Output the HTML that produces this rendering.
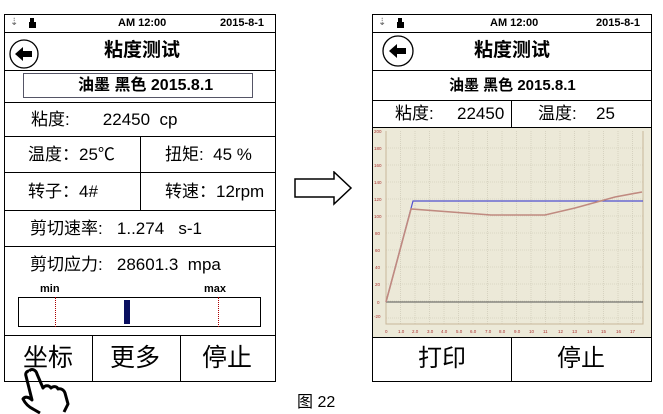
<!DOCTYPE html>
<html><head><meta charset="utf-8"><style>
*{margin:0;padding:0;box-sizing:border-box}
body{width:663px;height:414px;background:#fff;position:relative;overflow:hidden;font-family:"Liberation Sans","Noto Sans CJK SC",sans-serif;color:#000}
.a{position:absolute}
.b{position:absolute;border:1.5px solid #000}
.h{position:absolute;height:0;border-top:1.5px solid #000}
.v{position:absolute;width:0;border-left:1.5px solid #000}
.t{position:absolute;white-space:nowrap;line-height:1}
</style></head><body>
<!-- LEFT PANEL -->
<div class="b" style="left:4px;top:14px;width:272px;height:368px"></div>
<div class="h" style="left:4px;top:32px;width:272px"></div>
<div class="h" style="left:4px;top:70px;width:272px"></div>
<div class="h" style="left:4px;top:102px;width:272px"></div>
<div class="h" style="left:4px;top:136px;width:272px"></div>
<div class="h" style="left:4px;top:172px;width:272px"></div>
<div class="h" style="left:4px;top:210px;width:272px"></div>
<div class="h" style="left:4px;top:246px;width:272px"></div>
<div class="h" style="left:4px;top:335px;width:272px"></div>
<div class="v" style="left:140px;top:136px;height:74px"></div>
<div class="v" style="left:92px;top:335px;height:47px"></div>
<div class="v" style="left:180px;top:335px;height:47px"></div>
<div class="t" style="left:10px;top:18px;font-size:10px;color:#666">⇣</div>
<svg class="a" style="left:26px;top:17px" width="13" height="13"><path d="M3 5h7v6H3z M4 1h4v4H4z" fill="#000"/></svg>
<div class="t" style="left:118px;top:18px;font-size:11px;font-weight:bold">AM 12:00</div>
<div class="t" style="left:220px;top:18px;font-size:11px;font-weight:bold">2015-8-1</div>
<svg class="a" style="left:7px;top:38px" width="36" height="32"><circle cx="17" cy="16" r="14" fill="#fff" stroke="#000" stroke-width="1.3"/><path d="M8 16l8-7v4h9v6h-9v4z" fill="#000"/></svg>
<div class="t" style="left:104px;top:41px;font-size:19px;font-weight:bold">粘度测试</div>
<div class="a" style="left:23px;top:73px;width:230px;height:25px;border:1.2px solid #556"></div>
<div class="t" style="left:78px;top:78px;font-size:16px;font-weight:bold">油墨 黑色 2015.8.1</div>
<div class="t" style="left:31px;top:111px;font-size:17px">粘度:&nbsp;&nbsp;&nbsp;&nbsp;&nbsp;&nbsp;&nbsp;22450&nbsp;&nbsp;cp</div>
<div class="t" style="left:28px;top:146px;font-size:17px">温度：25℃</div>
<div class="t" style="left:165px;top:146px;font-size:17px">扭矩:&nbsp;&nbsp;45 %</div>
<div class="t" style="left:28px;top:183px;font-size:17px">转子：4#</div>
<div class="t" style="left:165px;top:183px;font-size:17px">转速：12rpm</div>
<div class="t" style="left:30px;top:220px;font-size:17px">剪切速率:&nbsp;&nbsp;&nbsp;1..274&nbsp;&nbsp;&nbsp;s-1</div>
<div class="t" style="left:30px;top:256px;font-size:17px">剪切应力:&nbsp;&nbsp;&nbsp;28601.3&nbsp;&nbsp;mpa</div>
<div class="t" style="left:40px;top:284px;font-size:11px;font-weight:bold">min</div>
<div class="t" style="left:204px;top:284px;font-size:11px;font-weight:bold">max</div>
<div class="a" style="left:18px;top:297px;width:243px;height:30px;border:1.2px solid #000"></div>
<div class="a" style="left:55px;top:297px;height:30px;border-left:1.5px dotted #a00"></div>
<div class="a" style="left:218px;top:297px;height:30px;border-left:1.5px dotted #a00"></div>
<div class="a" style="left:124px;top:300px;width:6px;height:24px;background:#0a1060"></div>
<div class="t" style="left:23px;top:346px;font-size:25px">坐标</div>
<div class="t" style="left:110px;top:346px;font-size:25px">更多</div>
<div class="t" style="left:202px;top:346px;font-size:25px">停止</div>
<svg class="a" style="left:20px;top:364px" width="60" height="50"><path d="M9 7c3-3 7-1 8 3l6 14c2-3 6-3 8 0 2-2 6-2 7 1 3-1 6 1 7 4l3 11-4 8M20 49l-7-4c-4-2-8-6-10-10 2-3 6-2 9 1L6 12c-1-3 1-5 3-5" fill="none" stroke="#000" stroke-width="3" stroke-linejoin="round"/></svg>
<!-- ARROW -->
<svg class="a" style="left:294px;top:171px" width="60" height="35"><path d="M1 8h39V1l17 16-17 16v-7H1z" fill="#fff" stroke="#000" stroke-width="1.5"/></svg>
<div class="t" style="left:297px;top:395px;font-size:16px">图 22</div>
<!-- RIGHT PANEL -->
<div class="b" style="left:372px;top:14px;width:280px;height:368px"></div>
<div class="h" style="left:372px;top:32px;width:280px"></div>
<div class="h" style="left:372px;top:70px;width:280px"></div>
<div class="h" style="left:372px;top:100px;width:280px"></div>
<div class="h" style="left:372px;top:127px;width:280px"></div>
<div class="h" style="left:372px;top:337px;width:280px"></div>
<div class="v" style="left:511px;top:100px;height:27px"></div>
<div class="v" style="left:511px;top:337px;height:45px"></div>
<div class="t" style="left:378px;top:18px;font-size:10px;color:#666">⇣</div>
<svg class="a" style="left:394px;top:17px" width="13" height="13"><path d="M3 5h7v6H3z M4 1h4v4H4z" fill="#000"/></svg>
<div class="t" style="left:490px;top:18px;font-size:11px;font-weight:bold">AM 12:00</div>
<div class="t" style="left:596px;top:18px;font-size:11px;font-weight:bold">2015-8-1</div>
<svg class="a" style="left:381px;top:35px" width="36" height="33"><circle cx="17" cy="16" r="15" fill="#fff" stroke="#000" stroke-width="1.3"/><path d="M8 16l8-7v4h9v6h-9v4z" fill="#000"/></svg>
<div class="t" style="left:474px;top:41px;font-size:19px;font-weight:bold">粘度测试</div>
<div class="t" style="left:449px;top:78px;font-size:15px;font-weight:bold">油墨 黑色 2015.8.1</div>
<div class="t" style="left:395px;top:105px;font-size:17px">粘度:</div>
<div class="t" style="left:457px;top:105px;font-size:17px">22450</div>
<div class="t" style="left:538px;top:105px;font-size:17px">温度:</div>
<div class="t" style="left:596px;top:105px;font-size:17px">25</div>
<svg class="a" style="left:373px;top:128px" width="278" height="209" font-family="Liberation Sans" font-size="4.5" fill="#a33">
<rect width="278" height="209" fill="#ece9d8"/>
<g stroke="#c8c4b0" stroke-dasharray="1,1" stroke-width="0.6">
<path d="M13 20h257M13 37h257M13 54h257M13 71h257M13 88h257M13 105h257M13 122h257M13 139h257M13 156h257M13 173h257M13 190h257"/>
<path d="M27.5 3v193M42 3v193M56.5 3v193M71 3v193M85.5 3v193M100 3v193M114.5 3v193M129 3v193M143.5 3v193M158 3v193M172.5 3v193M187 3v193M201.5 3v193M216 3v193M230.5 3v193M245 3v193M259.5 3v193"/>
</g>
<path d="M13 3v193h257V3" fill="none" stroke="#c9b79a" stroke-width="1"/>
<path d="M13 174h257" stroke="#555" stroke-width="1"/>
<path d="M13 174L40 73h230" fill="none" stroke="#5050d0" stroke-width="1.2"/>
<path d="M13 174L38 81l80 6h54l30 -7l40 -11l27 -5" fill="none" stroke="#c08a80" stroke-width="1.6"/>
<text x="1" y="5">200</text><text x="1" y="22">180</text><text x="1" y="39">160</text><text x="1" y="56">140</text><text x="1" y="73">120</text><text x="1" y="90">100</text><text x="2" y="107">80</text><text x="2" y="124">60</text><text x="2" y="141">40</text><text x="2" y="158">20</text><text x="4" y="176">0</text><text x="1" y="190">-20</text>
<text y="205"><tspan x="12">0</tspan><tspan x="25">1.0</tspan><tspan x="39">2.0</tspan><tspan x="54">3.0</tspan><tspan x="68">4.0</tspan><tspan x="83">5.0</tspan><tspan x="97">6.0</tspan><tspan x="112">7.0</tspan><tspan x="126">8.0</tspan><tspan x="141">9.0</tspan><tspan x="156">10</tspan><tspan x="170">11</tspan><tspan x="185">12</tspan><tspan x="199">13</tspan><tspan x="214">14</tspan><tspan x="228">15</tspan><tspan x="243">16</tspan><tspan x="257">17</tspan></text>
</svg>
<div class="t" style="left:418px;top:347px;font-size:24px">打印</div>
<div class="t" style="left:557px;top:347px;font-size:24px">停止</div>
</body></html>
